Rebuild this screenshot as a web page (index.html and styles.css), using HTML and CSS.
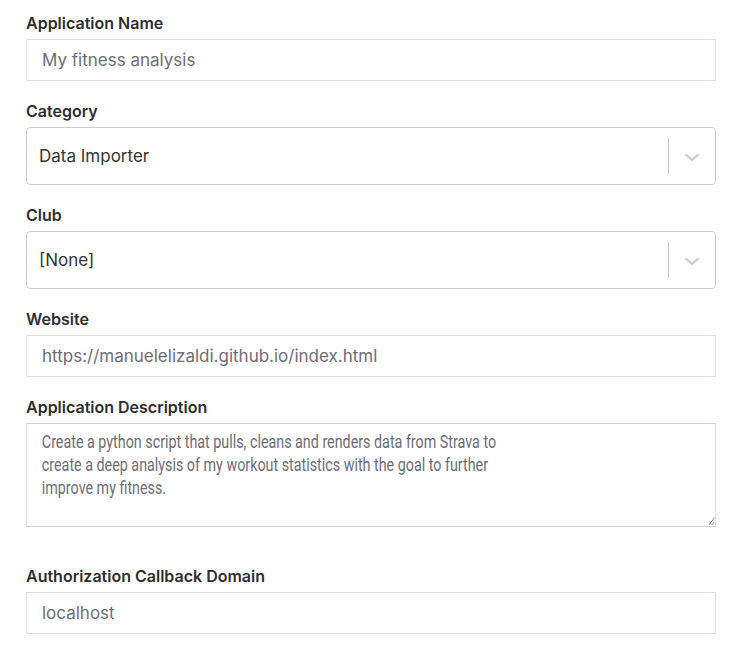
FILE: index.html
```html
<!DOCTYPE html>
<html lang="en">
<head>
<meta charset="utf-8">
<title>Application form</title>
<link rel="stylesheet" href="styles.css">
</head>
<body>
<form class="form">
  <div class="field">
    <label class="label">Application Name</label>
    <input class="input" type="text" value="My fitness analysis">
  </div>
  <div class="field">
    <label class="label">Category</label>
    <div class="select">
      <span class="select-value">Data Importer</span>
      <span class="select-sep"></span>
      <span class="select-arrow"><svg width="16" height="9" viewBox="0 0 16 9"><path d="M2 1.8 L8 7 L14 1.8" fill="none" stroke="#cccccc" stroke-width="2.2" stroke-linecap="round" stroke-linejoin="round"/></svg></span>
    </div>
  </div>
  <div class="field">
    <label class="label">Club</label>
    <div class="select">
      <span class="select-value">[None]</span>
      <span class="select-sep"></span>
      <span class="select-arrow"><svg width="16" height="9" viewBox="0 0 16 9"><path d="M2 1.8 L8 7 L14 1.8" fill="none" stroke="#cccccc" stroke-width="2.2" stroke-linecap="round" stroke-linejoin="round"/></svg></span>
    </div>
  </div>
  <div class="field">
    <label class="label">Website</label>
    <input class="input" type="text" value="https://manuelelizaldi.github.io/index.html">
  </div>
  <div class="field field-wide">
    <label class="label">Application Description</label>
    <div class="textarea-wrap">
      <textarea class="textarea">Create a python script that pulls, cleans and renders data from Strava to
create a deep analysis of my workout statistics with the goal to further
improve my fitness.</textarea>
    </div>
  </div>
  <div class="field">
    <label class="label">Authorization Callback Domain</label>
    <input class="input" type="text" value="localhost">
  </div>
</form>
</body>
</html>
```
FILE: styles.css
```css
* { box-sizing: border-box; }
html, body { margin: 0; background: #ffffff; }
body {
  padding: 13px 16px 0 26px;
  font-family: Inter, "Noto Sans", sans-serif;
  color: #333333;
  overflow: hidden;
}
.form { display: flex; flex-direction: column; }
.field { display: flex; flex-direction: column; margin-bottom: 20px; }
.field-wide { margin-bottom: 39px; }
.label {
  font-size: 16px;
  line-height: 20px;
  font-weight: 600;
  color: #2d2d32;
  margin-bottom: 6px;
}
.input {
  height: 42px;
  width: 100%;
  border: 1px solid #dfdfe8;
  border-radius: 0;
  padding: 0 15px;
  font-family: Inter, "Noto Sans", sans-serif;
  font-size: 17px;
  color: #6d6d78;
  background: #fff;
  outline: none;
}
.select {
  height: 58px;
  border: 1px solid #cccccc;
  border-radius: 4px;
  display: flex;
  align-items: center;
  padding-left: 12px;
  background: #fff;
}
.select-value {
  flex: 1;
  font-size: 17px;
  color: #333333;
}
.select-sep {
  width: 1px;
  align-self: stretch;
  margin: 10px 0;
  background: #cccccc;
}
.select-arrow {
  width: 46px;
  display: flex;
  justify-content: center;
  align-items: center;
  padding-top: 2px;
}
.textarea-wrap {
  height: 104px;
  width: 690px;
}
.textarea {
  display: block;
  height: 104px;
  width: 916px;
  transform: scaleX(0.753);
  transform-origin: 0 0;
  border: 1px solid #d2d2dc;
  border-radius: 0;
  padding: 6px 20px;
  font-family: Roboto, "Liberation Sans", sans-serif;
  font-size: 19px;
  line-height: 23px;
  color: #6d6d78;
  resize: both;
  outline: none;
  white-space: pre;
  overflow: hidden;
}
```
